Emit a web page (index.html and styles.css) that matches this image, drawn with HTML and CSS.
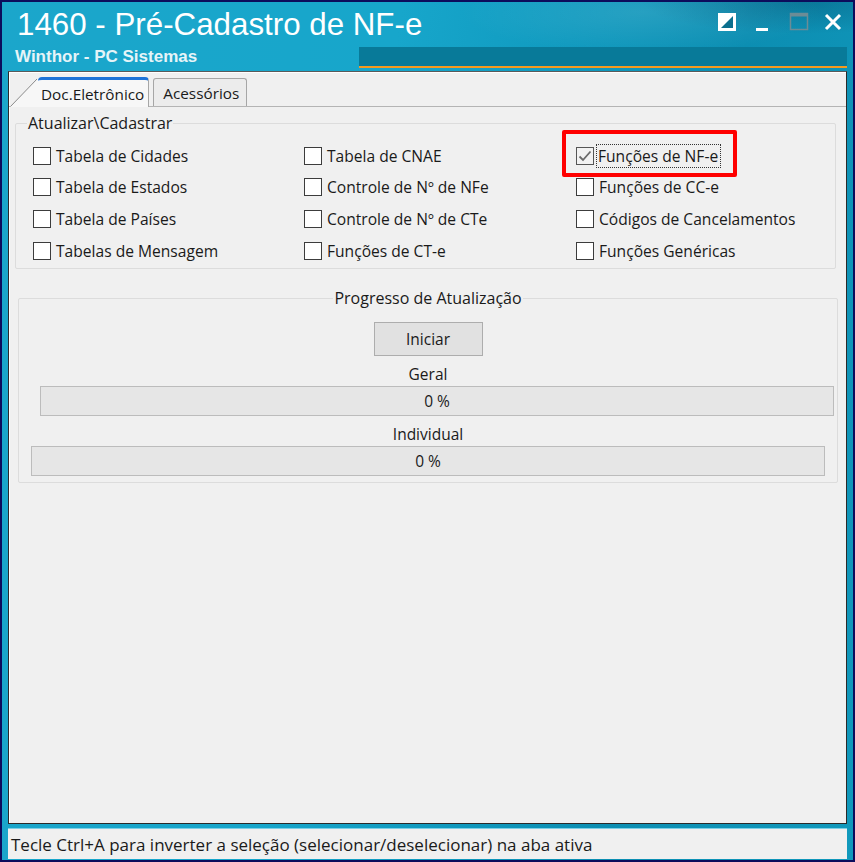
FILE: index.html
```html
<!DOCTYPE html>
<html lang="pt-BR">
<head>
<meta charset="utf-8">
<title>1460 - Pré-Cadastro de NF-e</title>
<link rel="stylesheet" href="styles.css">
</head>
<body>
<div class="window">
  <div class="titlebar">
    <div class="title-row">
      <div class="title">1460 - Pré-Cadastro de NF-e</div>
      <div class="winbtns">
        <svg class="wb" width="20" height="20" viewBox="0 0 20 20"><rect x="1" y="1" width="18" height="18" fill="#fff"/><polygon points="4,16 16,4 16,16" fill="#0b6f8e"/></svg>
        <svg class="wb" width="16" height="20" viewBox="0 0 16 20"><rect x="1" y="16" width="12" height="3" fill="#fff"/></svg>
        <svg class="wb" width="20" height="20" viewBox="0 0 20 20"><rect x="1.5" y="1.5" width="17" height="16" fill="none" stroke="#6c8c96" stroke-width="1.5"/><rect x="1.5" y="1.5" width="17" height="3" fill="#6c8c96"/></svg>
        <svg class="wb" width="20" height="20" viewBox="0 0 20 20"><path d="M3 3 L17 17 M17 3 L3 17" stroke="#fff" stroke-width="3"/></svg>
      </div>
    </div>
    <div class="sub-row">
      <div class="subtitle">Winthor - PC Sistemas</div>
      <div class="band"></div>
    </div>
  </div>

  <div class="client">
    <div class="tabstrip">
      <svg class="slant" width="28" height="30" viewBox="0 0 28 30"><polygon points="0,30 27,2 28,2 28,30" fill="#f7f7f7"/><line x1="0.5" y1="29.5" x2="27" y2="2" stroke="#8a8a8a" stroke-width="1"/></svg>
      <div class="tab active">Doc.Eletrônico</div>
      <div class="tab">Acessórios</div>
    </div>
    <div class="tabbody">
      <fieldset class="group">
        <legend>Atualizar\Cadastrar</legend>
        <div class="grid">
          <label class="chk"><span class="box"></span>Tabela de Cidades</label>
          <label class="chk"><span class="box"></span>Tabela de CNAE</label>
          <label class="chk checked"><span class="box"><svg width="16" height="16" viewBox="0 0 16 16"><path d="M2.5 8.5 L6 12 L13.5 3.5" fill="none" stroke="#6a6a6a" stroke-width="1.8"/></svg></span><span class="focus">Funções de NF-e</span></label>

          <label class="chk"><span class="box"></span>Tabela de Estados</label>
          <label class="chk"><span class="box"></span>Controle de Nº de NFe</label>
          <label class="chk"><span class="box"></span>Funções de CC-e</label>

          <label class="chk"><span class="box"></span>Tabela de Países</label>
          <label class="chk"><span class="box"></span>Controle de Nº de CTe</label>
          <label class="chk"><span class="box"></span>Códigos de Cancelamentos</label>

          <label class="chk"><span class="box"></span>Tabelas de Mensagem</label>
          <label class="chk"><span class="box"></span>Funções de CT-e</label>
          <label class="chk"><span class="box"></span>Funções Genéricas</label>
        </div>
        <div class="highlight"></div>
      </fieldset>

      <fieldset class="progress">
        <legend>Progresso de Atualização</legend>
        <div class="btn">Iniciar</div>
        <div class="plabel">Geral</div>
        <div class="bar bar1">0 %</div>
        <div class="plabel">Individual</div>
        <div class="bar bar2">0 %</div>
      </fieldset>
    </div>
  </div>

  <div class="statusbar">Tecle Ctrl+A para inverter a seleção (selecionar/deselecionar) na aba ativa</div>
</div>
</body>
</html>
```

FILE: styles.css
```css
* { box-sizing: border-box; }
html, body { margin: 0; padding: 0; }
body {
  width: 855px;
  height: 862px;
  overflow: hidden;
  font-family: "Open Sans", "Noto Sans", sans-serif;
  color: #1a1a1a;
}
.window {
  width: 855px;
  height: 862px;
  border: 2px solid #0c0c5c;
  background: linear-gradient(100deg, #1ba6cb 0%, #17a6cb 40%, #0f98bd 60%, #0c8eb2 75%, #1199bc 100%);
  display: flex;
  flex-direction: column;
}
.titlebar {
  height: 69px;
  display: flex;
  flex-direction: column;
  background:
    radial-gradient(ellipse 260px 60px at 640px 10px, rgba(255,255,255,0.10), rgba(255,255,255,0) 70%),
    radial-gradient(ellipse 200px 40px at 800px 0px, rgba(0,40,70,0.25), rgba(0,40,70,0) 80%);
}
.title-row {
  display: flex;
  align-items: flex-start;
  justify-content: space-between;
  height: 43px;
  padding-left: 15px;
}
.title {
  font-family: "Liberation Sans", Arial, sans-serif;
  font-size: 31.3px;
  color: #ffffff;
  line-height: 45px;
}
.winbtns {
  display: flex;
  align-items: center;
  margin-top: 10px;
  margin-right: 10px;
}
.wb { display: block; }
.winbtns .wb:nth-child(1) { margin-right: 18px; }
.winbtns .wb:nth-child(2) { margin-right: 18px; }
.winbtns .wb:nth-child(3) { margin-right: 14px; }
.sub-row {
  display: flex;
  align-items: stretch;
  height: 23px;
  padding-left: 13px;
}
.subtitle {
  font-family: "Liberation Sans", Arial, sans-serif;
  font-weight: bold;
  font-size: 17px;
  color: #e6f4f8;
  line-height: 23px;
}
.band {
  flex: 1;
  margin-left: 162px;
  margin-right: 6px;
  margin-top: 2px;
  background: #087a99;
  border-bottom: 2px solid #f59a1e;
}
.client {
  margin: 0 6px 0 6px;
  height: 753px;
  background: #f0f0f0;
  border: 1px solid #2a2a2a;
  border-top-color: #5a5a5a;
  display: flex;
  flex-direction: column;
  box-shadow: inset 1px 1px 0 #ffffff;
}
.tabstrip {
  display: flex;
  align-items: flex-end;
  height: 35px;
  padding-left: 1px;
  border-bottom: 1px solid #b4b4b4;
}
.slant { display: block; margin-bottom: -1px; }
.tab {
  font-size: 15.3px;
  height: 28px;
  line-height: 28px;
  padding: 0 7px 0 9px;
  background: #ececec;
  border: 1px solid #a6a6a6;
  border-bottom: none;
  border-radius: 3px 3px 0 0;
  margin-left: 4px;
}
.tab.active {
  margin-left: 0;
  height: 30px;
  padding: 0 4px 0 3px;
  background: #f7f7f7;
  border: none;
  border-top: 3px solid #1e73d8;
  border-right: 1px solid #a6a6a6;
  border-radius: 4px 4px 0 0;
  margin-bottom: -1px;
  line-height: 28px;
}
.tabbody {
  flex: 1;
  padding: 7px 10px 0 6px;
  display: flex;
  flex-direction: column;
}
fieldset {
  margin: 0;
  border: 1px solid #dcdcdc;
  border-radius: 2px;
  min-width: 0;
}
legend {
  font-size: 16px;
  padding: 0 1px;
  line-height: 18px;
}
.group {
  position: relative;
  height: 155px;
  padding: 8px 0 0 17px;
}
.group legend { margin-left: -6px; }
.grid {
  display: grid;
  grid-template-columns: 271px 272px 1fr;
  grid-auto-rows: 31.6px;
}
.chk {
  display: flex;
  align-items: center;
  font-size: 15.6px;
  white-space: nowrap;
}
.box {
  width: 18px;
  height: 18px;
  border: 1px solid #3c3c3c;
  background: #ffffff;
  margin-right: 5px;
  display: flex;
  align-items: center;
  justify-content: center;
  flex: none;
}
.box svg { display: block; }
.chk.checked .box { background: #f2f2f2; border-color: #555; }
.focus {
  outline: 1px dotted #333;
  outline-offset: 1px;
  line-height: 20px;
  padding: 0 1px 0 0;
  margin-left: -1px;
}
.highlight {
  position: absolute;
  left: 546px;
  top: -2px;
  width: 175px;
  height: 47px;
  border: 4px solid #ff0000;
  border-radius: 2px;
}
.progress {
  margin-top: 20px;
  margin-left: 3px;
  margin-right: -2px;
  height: 194px;
  padding: 0;
  display: flex;
  flex-direction: column;
  align-items: flex-start;
}
.progress legend {
  margin: 0 auto;
  text-align: center;
}
.btn {
  align-self: center;
  width: 109px;
  height: 34px;
  background: #e1e1e1;
  border: 1px solid #adadad;
  display: flex;
  align-items: center;
  justify-content: center;
  font-size: 15.5px;
  margin-top: 15px;
}
.plabel {
  align-self: center;
  font-size: 15.5px;
  line-height: 20px;
  margin-top: 8px;
  height: 22px;
}
.bar {
  width: 794px;
  height: 30px;
  background: #e6e6e6;
  border: 1px solid #bcbcbc;
  display: flex;
  align-items: center;
  justify-content: center;
  font-size: 15.5px;
}
.bar1 { margin-left: 21px; }
.bar2 { margin-left: 12px; }
.statusbar {
  margin: 4px 6px 0 6px;
  height: 31px;
  background: #f0f0f0;
  border-top: 1px solid #7fd0e6;
  font-size: 17px;
  line-height: 31px;
  padding-left: 3px;
  white-space: nowrap;
}
```
